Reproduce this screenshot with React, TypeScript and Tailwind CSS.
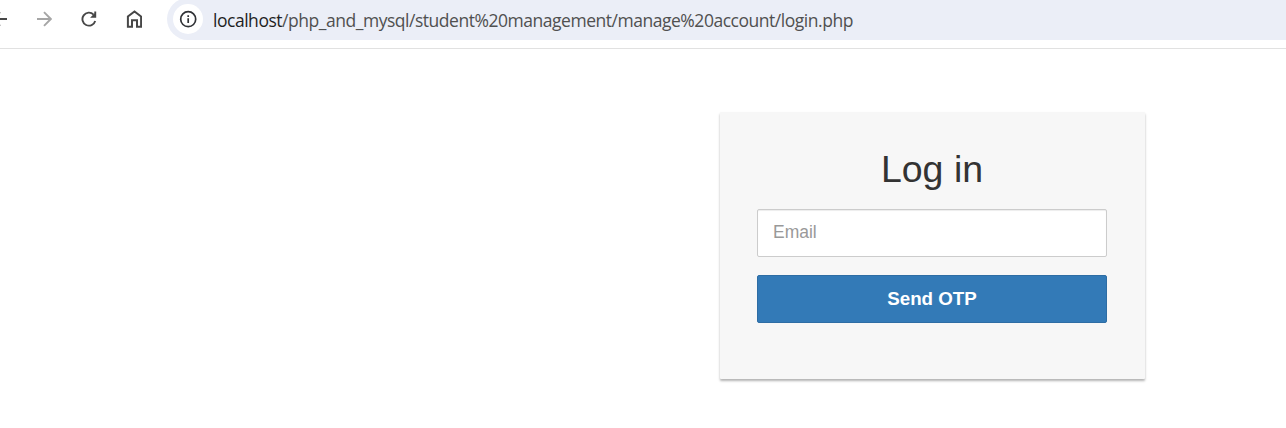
function BackIcon() {
  return (
    <svg className="absolute left-[-8px] top-[11px]" width="16" height="16" viewBox="0 0 16 16" fill="none" stroke="#474747" strokeWidth="1.9">
      <path d="M15 8H1.5M8 1.2L1.2 8L8 14.8" />
    </svg>
  );
}

function ForwardIcon() {
  return (
    <svg width="16" height="16" viewBox="0 0 16 16" fill="none" stroke="#a6a6a6" strokeWidth="1.9">
      <path d="M1 8H14.5M8 1.2L14.8 8L8 14.8" />
    </svg>
  );
}

function ReloadIcon() {
  return (
    <svg width="16" height="16" viewBox="0 0 16 16" fill="none" stroke="#474747" strokeWidth="1.9">
      <path d="M14.2 9.9A6.5 6.5 0 1 1 12.6 3.6" />
      <path d="M15.2 0.6V6.7H9.1L12.1 3.7L13.3 2.5V0.6Z" fill="#474747" stroke="none" />
    </svg>
  );
}

function HomeIcon() {
  return (
    <svg width="16" height="18" viewBox="0 0 16 18" fill="none" stroke="#474747" strokeWidth="2">
      <path d="M1.9 16.7V6.5L8.5 1.4L15.1 6.5V16.7H11V10.3H6V16.7Z" />
    </svg>
  );
}

function InfoIcon() {
  return (
    <svg width="18" height="18" viewBox="0 0 18 18" fill="none" stroke="#303236" strokeWidth="1.7">
      <circle cx="9.2" cy="9.2" r="7.5" />
      <path d="M9.2 8.2V12.9M9.2 5.2V6.9" />
    </svg>
  );
}

export default function App() {
  return (
    <div className="h-[428px] w-full overflow-hidden bg-white font-['Liberation_Sans',Arial,sans-serif]">
      <header className="relative flex h-[49px] items-start overflow-hidden border-b border-[#e1e1e1]">
        <BackIcon />
        <div className="ml-[36px] flex h-[38px] w-[131px] items-center">
          <ForwardIcon />
          <div className="ml-[29px]"><ReloadIcon /></div>
          <div className="ml-[29px]"><HomeIcon /></div>
        </div>
        <div className="mt-[-2px] flex h-[42px] flex-1 items-center rounded-l-full bg-[#ebeef7] pl-[6px]">
          <span className="flex size-[30px] items-center justify-center rounded-full bg-white">
            <InfoIcon />
          </span>
          <span className="ml-[10px] whitespace-nowrap pt-[2px] font-['Open_Sans','Noto_Sans',sans-serif] text-[17.5px] leading-[24px] tracking-[-0.47px] text-[#505050]">
            <span className="text-[#1f1f1f]">localhost</span>/php_and_mysql/student%20management/manage%20account/login.php
          </span>
        </div>
      </header>
      <main className="pl-[720px] pt-[63px]">
        <form className="h-[267px] w-[425px] rounded-[1px] bg-[#f7f7f7] px-[37px] pt-[36px] shadow-[0_2px_2.5px_rgba(0,0,0,0.3)]" onSubmit={(e) => e.preventDefault()}>
          <h2 className="pr-[1px] text-center text-[37.5px] leading-[43px] text-[#333333]">Log in</h2>
          <input
            type="email"
            placeholder="Email"
            className="mt-[18px] block h-[48px] w-[350px] rounded-[2px] border border-[#cccccc] bg-white px-[15px] pb-[2px] text-[17.5px] text-[#555555] shadow-[inset_0_1px_1px_rgba(0,0,0,0.075)] outline-none placeholder:text-[#999999]"
          />
          <button className="mt-[18px] block h-[48px] w-[350px] rounded-[2px] border border-[#2e6da4] bg-[#337ab7] text-[18.75px] font-bold text-white">
            Send OTP
          </button>
        </form>
      </main>
    </div>
  );
}
